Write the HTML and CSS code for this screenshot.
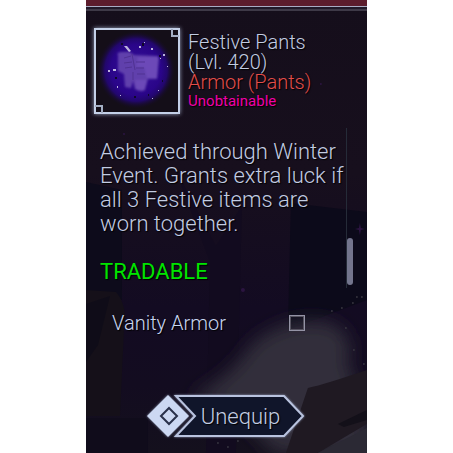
FILE: index.html
```
<!DOCTYPE html>
<html lang="en">

<head>
    <meta charset="UTF-8">
    <meta name="viewport" content="width=device-width, initial-scale=1.0">
    <title>Festive Pants</title>
    <link rel="stylesheet" href="styles.css">
</head>

<body>
    <main class="panel">
        <!-- dimmed artwork behind the panel -->
        <svg class="scene" viewBox="0 0 281 453" preserveAspectRatio="none" aria-hidden="true">
            <defs>
                <linearGradient id="sky" x1="0" y1="0" x2="0" y2="1">
                    <stop offset="0" stop-color="#150e1b" />
                    <stop offset="0.38" stop-color="#170f1d" />
                    <stop offset="0.68" stop-color="#130b22" />
                    <stop offset="0.85" stop-color="#130c20" />
                    <stop offset="1" stop-color="#14101d" />
                </linearGradient>
                <filter id="soft" x="-30%" y="-30%" width="160%" height="160%">
                    <feGaussianBlur stdDeviation="9" />
                </filter>
            </defs>
            <rect width="281" height="453" fill="url(#sky)" />
            <path d="M0 182L36 190V300L0 290Z" fill="#0d0b1b" />
            <path d="M88 166L130 246L156 206L150 453H120L124 262Z" fill="#120b1f" />
            <path d="M205 203L281 212V300L202 330Z" fill="#0c0a1a" />
            <path d="M0 290L30 292Q42 306 38 330L34 416H0Z" fill="#151019" />
            <path d="M0 304L24 296L12 345L0 362Z" fill="#0f0c18" />
            <path d="M0 418H62V453H0Z" fill="#100c1b" />
            <path d="M105 398Q150 372 165 345Q198 316 240 322Q270 330 262 362L281 420V453H190L150 412Z" fill="#312f3a" filter="url(#soft)" />
            <path d="M281 370Q240 384 222 388L200 453H232L281 424Z" fill="#1f1922" />
            <path d="M252 424L281 410V420L258 427Z" fill="#131019" />
            <path d="M232 453L281 428V453Z" fill="#2b2934" />
            <g fill="#2b1440">
                <path d="M274 223L275 228L279 229L275 230L274 235L273 230L269 229L273 228Z" />
                <circle cx="38" cy="134" r="1" />
                <circle cx="157" cy="290" r="2" />
                <circle cx="235" cy="84" r="1" />
            </g>
            <g fill="#34323d">
                <circle cx="271" cy="297" r="1" />
                <circle cx="276" cy="297" r="1" />
                <circle cx="267" cy="303" r="1" />
                <circle cx="246" cy="311" r="1" />
                <circle cx="256" cy="308" r="1" />
                <circle cx="260" cy="328" r="1" />
                <circle cx="278" cy="364" r="1" />
                <circle cx="268" cy="350" r="1" />
                <circle cx="132" cy="443" r="1" />
                <circle cx="142" cy="447" r="1" />
                <circle cx="152" cy="441" r="1" />
            </g>
        </svg>

        <div class="topbar"></div>

        <header class="item">
            <svg class="itemIcon" viewBox="0 0 86 86" role="img" aria-label="Festive Pants">
                <defs>
                    <radialGradient id="orb">
                        <stop offset="0" stop-color="#36109a" />
                        <stop offset="0.65" stop-color="#2a0589" />
                        <stop offset="0.8" stop-color="#22076c" />
                        <stop offset="1" stop-color="#150c20" stop-opacity="0" />
                    </radialGradient>
                    <filter id="blur">
                        <feGaussianBlur stdDeviation="1" />
                    </filter>
                </defs>
                <rect x="1" y="1" width="84" height="84" fill="#140e18" />
                <circle cx="42" cy="42" r="39" fill="url(#orb)" />
                <g filter="url(#blur)">
                    <path d="M24 27Q22 25 27 24L36 24L40 27L64 28L65 31L63 51H54L51 62Q47 65 41 61L39 53L37 60L31 59L30 46L24 43Z" fill="#6040ac" />
                    <path d="M44 29H64L63 50H53L50 39H42Z" fill="#6c4ab8" />
                    <path d="M41 52H53L50 62L42 61Z" fill="#6c4ab8" />
                </g>
                <path d="M30 30L37 28M30 35L38 34M31 40L38 39M42 34H51M42 40H50M43 46H51M38 26L41 42M39 44V52" stroke="#503293" fill="none" />
                <g fill="#bcb4dc">
                    <path d="M30 18L33 18L37 23L35 24Z" />
                    <rect x="14" y="42" width="2" height="2" />
                    <rect x="19" y="41" width="3" height="2" />
                    <rect x="45" y="18" width="2" height="2" />
                    <rect x="57" y="20" width="2" height="2" />
                    <rect x="69" y="26" width="2" height="2" />
                    <rect x="23" y="58" width="1" height="2" />
                    <rect x="50" y="14" width="1" height="1" />
                    <rect x="66" y="30" width="1" height="1" />
                    <rect x="73" y="38" width="1" height="1" />
                    <rect x="26" y="67" width="1" height="1" />
                    <rect x="58" y="70" width="1" height="1" />
                    <rect x="64" y="62" width="1" height="1" />
                </g>
                <g fill="#10082a">
                    <rect x="27" y="15" width="2" height="2" />
                    <rect x="48" y="15" width="2" height="3" />
                    <rect x="65" y="27" width="2" height="2" />
                    <rect x="40" y="68" width="2" height="2" />
                    <rect x="21" y="49" width="2" height="2" />
                    <rect x="68" y="52" width="1" height="2" />
                    <rect x="54" y="66" width="1" height="2" />
                </g>
                <path d="M1 1H85V85H1Z" fill="none" stroke="#c4d0e8" stroke-width="2" />
                <path d="M78 1V8H85M1 78H8V85" fill="none" stroke="#a4aec4" stroke-width="2" />
            </svg>
            <div class="itemText">
                <h1>Festive Pants<br>(Lvl. 420)</h1>
                <p class="type">Armor (Pants)</p>
                <p class="rarity">Unobtainable</p>
            </div>
        </header>

        <section class="details">
            <div class="description">
                <p>Achieved through Winter<br>Event. Grants extra luck if<br>all 3 Festive items are<br>worn together.</p>
                <p class="tradable">TRADABLE</p>
            </div>
            <div class="scrollbar"></div>
        </section>

        <div class="option">
            <label for="vanity">Vanity Armor</label>
            <input type="checkbox" id="vanity">
        </div>

        <button class="unequip" type="button">
            <svg class="buttonFrame" viewBox="0 0 160 46" aria-hidden="true">
                <path d="M30 3H138L157 23L138 43H30L49 23Z" fill="#10152a" stroke="#b9c3df" stroke-width="2" />
                <path d="M22 2L43 23L22 44L1 23Z" fill="#ccd8f2" />
                <path d="M23 15L31 23L23 31L15 23Z" fill="none" stroke="#29304a" stroke-width="2" />
            </svg>
            <span>Unequip</span>
        </button>
    </main>
</body>

</html>
```
FILE: styles.css
```
* {
    margin: 0;
    padding: 0;
    box-sizing: border-box;
}

body {
    background-color: white;
    color: #c3cce2;
    font-family: Roboto, "Liberation Sans", sans-serif;
    font-weight: 300;
}

.panel {
    position: relative;
    display: flex;
    flex-direction: column;
    width: 62%;
    min-height: 100vh;
    margin: 0 auto;
    background-color: #150e1b;
    text-shadow: 1px 1px 1px black;
}

.scene {
    position: absolute;
    width: 100%;
    height: 100%;
}

.topbar,
.item,
.details,
.option,
.unequip {
    position: relative;
}

.topbar {
    height: 11px;
    background: linear-gradient(#5c1c2c 6px, #a9abc2 6px, #a9abc2 7px, #211929 7px, #211929 9px, #3e3947 9px);
}

.item {
    display: flex;
    gap: 8px;
    padding: 17px 8px 14px;
}

.itemIcon {
    flex: none;
    width: 86px;
    height: 86px;
    filter: drop-shadow(0 0 2px #9aa3bd);
}

.itemText {
    padding-top: 4px;
    white-space: nowrap;
}

h1,
.type {
    font-size: 20px;
    font-weight: 300;
    line-height: 20px;
}

.type {
    color: #e34d4a;
}

.rarity {
    color: #f000a8;
    font-size: 15px;
    font-weight: 400;
    line-height: 18px;
}

.details {
    display: flex;
    height: 160px;
    padding: 0 14px;
}

.description {
    flex: 1;
    min-width: 0;
    padding-top: 12px;
    border-right: 1px solid #252b38;
    font-size: 22px;
    line-height: 24px;
    white-space: nowrap;
}

.tradable {
    margin-top: 24px;
    color: #00e400;
    font-weight: 400;
}

.scrollbar {
    flex: none;
    width: 6px;
    height: 47px;
    margin-top: 110px;
    border-radius: 3px;
    background-color: #73758d;
}

.option {
    display: flex;
    align-items: center;
    justify-content: space-between;
    margin-top: 23px;
    padding: 0 62px 0 26px;
    color: #c8d5f0;
    font-size: 20px;
    line-height: 24px;
}

.option input {
    appearance: none;
    width: 16px;
    height: 16px;
    border: 1px solid #9493a5;
    outline: 1px solid #55525f;
    outline-offset: -2px;
    cursor: pointer;
}

.unequip {
    align-self: center;
    width: 160px;
    height: 46px;
    margin: 58px 0 12px;
    padding-left: 28px;
    border: 0;
    background: none;
    color: #c3cce2;
    font: inherit;
    font-size: 22px;
    text-shadow: inherit;
    cursor: pointer;
}

.unequip span {
    position: relative;
}

.buttonFrame {
    position: absolute;
    top: 0;
    left: 0;
    width: 100%;
    height: 100%;
    filter: drop-shadow(0 0 1px #8e97b3);
}
```
